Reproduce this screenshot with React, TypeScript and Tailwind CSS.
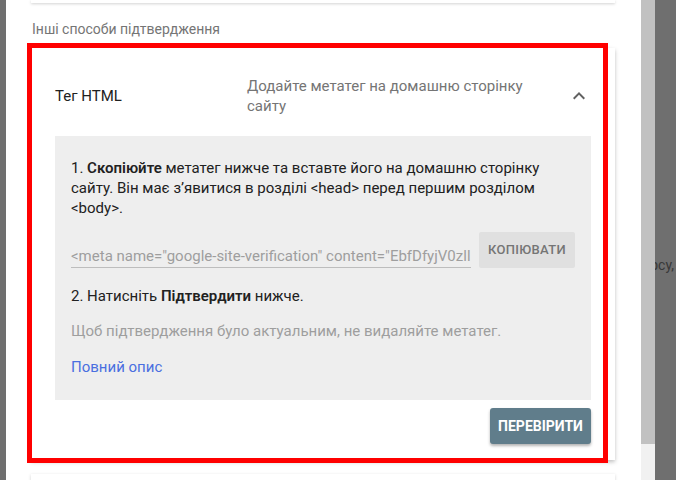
import React from "react";

function ChevronUp() {
  return (
    <svg viewBox="0 0 24 24" className="size-6 fill-[#616161]">
      <path d="M7.41 15.41L12 10.83l4.59 4.58L18 14l-6-6-6 6z" />
    </svg>
  );
}

export default function App() {
  return (
    <div
      className="relative w-[676px] h-[480px] flex overflow-hidden bg-[#6f6f6f]"
      style={{ fontFamily: "Roboto, 'Noto Sans', sans-serif" }}
    >
      {/* modal sheet */}
      <div className="ml-[6px] w-[635px] h-full bg-white overflow-hidden">
        <div className="ml-[25px] mr-[26px] h-[3px] bg-white shadow-[0_1px_3px_rgba(0,0,0,0.18)]" />
        <div className="pl-[26px] pt-[16px] pb-[9px] text-[14px] leading-[20px] text-[#757575]">
          Інші способи підтвердження
        </div>

        {/* HTML tag card */}
        <div className="ml-[25px] mr-[26px] bg-white shadow-[0_2px_4px_rgba(0,0,0,0.25)] px-6 pt-7 pb-4">
          <div className="flex items-center h-10 mb-5">
            <div className="w-[192px] text-[15px] text-[#212121]">Тег HTML</div>
            <div className="flex-1 text-[15px] leading-[20px] text-[#757575] pr-10">
              Додайте метатег на домашню сторінку сайту
            </div>
            <ChevronUp />
          </div>

          <div className="bg-[#eeeeee] px-4 pt-[22px] pb-[23px] text-[15px] leading-[20px] text-[#212121]">
            <p className="pr-6">
              1. <b className="font-semibold">Скопіюйте</b> метатег нижче та вставте його на домашню сторінку
              сайту. Він має з’явитися в розділі &lt;head&gt; перед першим розділом &lt;body&gt;.
            </p>
            <div className="flex items-center gap-2 mt-[14px]">
              <div className="flex-1 overflow-hidden whitespace-nowrap border-b border-[#bdbdbd] text-[#9e9e9e] pt-[14px] pb-[1px]">
                &lt;meta name="google-site-verification" content="EbfDfyjV0zlIq8cW3kX0pHnT7r" /&gt;
              </div>
              <button className="w-[96px] h-9 rounded-[2px] bg-[#e0e0e0] text-[13px] font-medium text-[#757575] tracking-[0.3px]">
                КОПІЮВАТИ
              </button>
            </div>
            <p className="mt-[18px]">
              2. Натисніть <b className="font-semibold">Підтвердити</b> нижче.
            </p>
            <p className="mt-[15px] text-[#9e9e9e]">
              Щоб підтвердження було актуальним, не видаляйте метатег.
            </p>
            <p className="mt-4 text-[#4a6ee0]">Повний опис</p>
          </div>

          <div className="flex justify-end mt-2">
            <button className="w-[101px] h-9 rounded-[3px] bg-[#607d8b] text-white text-[14px] font-bold shadow-[0_2px_3px_rgba(0,0,0,0.3)]">
              ПЕРЕВІРИТИ
            </button>
          </div>
        </div>

        <div className="ml-[25px] mr-[26px] mt-[14px] h-10 bg-white shadow-[0_1px_3px_rgba(0,0,0,0.18)]" />
      </div>

      {/* scrollbar */}
      <div className="w-[14px] h-full flex flex-col bg-[#f1f1f1]">
        <div className="h-[444px] bg-[#c1c1c1]" />
      </div>

      {/* background page under overlay */}
      <div className="flex-1 h-full pt-[255px] overflow-hidden whitespace-nowrap text-[14px] leading-[20px] text-[#383838]">
        <span className="-ml-[34px]">ресурсу,</span>
      </div>

      {/* annotation */}
      <div className="absolute left-[27px] top-[43px] w-[581px] h-[420px] border-[5px] border-[#ff0000] pointer-events-none" />
    </div>
  );
}
